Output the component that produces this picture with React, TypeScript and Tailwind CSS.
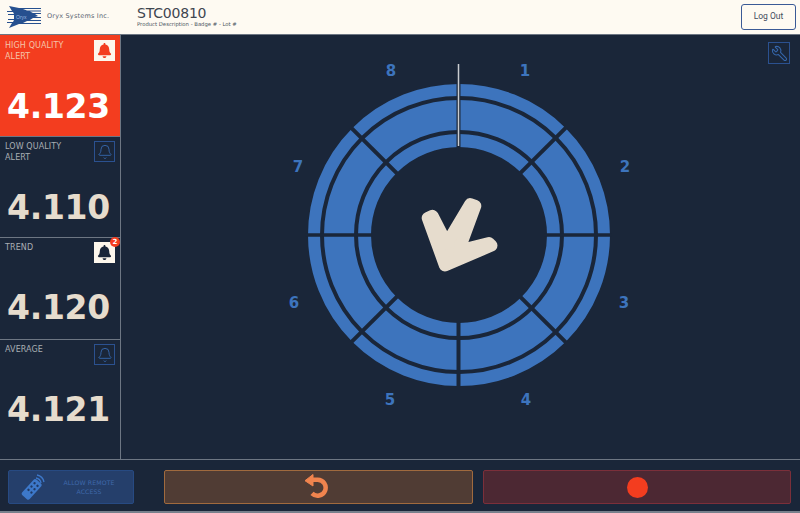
import React from 'react';
import { Bell, Wrench } from 'lucide-react';
import { FaBell } from 'react-icons/fa';

const cx = 458.5;
const cy = 235;

const wheelLabels = [
  { n: '1', x: 525, y: 70 },
  { n: '2', x: 625, y: 166 },
  { n: '3', x: 624, y: 302 },
  { n: '4', x: 526, y: 399 },
  { n: '5', x: 390, y: 399 },
  { n: '6', x: 294, y: 302 },
  { n: '7', x: 298, y: 166 },
  { n: '8', x: 391, y: 70 },
];

const Logo = () => (
  <svg width="36" height="22" viewBox="0 0 36 22" className="shrink-0">
    <path d="M3 0 L13 2 H35 V3 H17 L21 4.5 H35 V5.5 H24 L27 7 H35 V8 H29 L32 10 L29 11 H35 V12 H27 L24 14 H35 V15 H21 L17 17 H35 V18 H13 L3 22 L6 17 H1 V16 H7 L8 14 H2 V13 H8 L8 9 H2 V8 H8 L7 6 H1 V5 H6 Z" fill="#26508f" />
    <text x="10" y="13" fontSize="5" fill="#9db9e0" fontFamily="Liberation Sans, sans-serif">Oryx</text>
  </svg>
);

const RemoteIcon = () => (
  <svg width="24" height="26" viewBox="0 0 24 26" fill="none">
    <g transform="rotate(42 11 15)">
      <rect x="6" y="5" width="10" height="21" rx="2" fill="#3d78c9" />
      <circle cx="9" cy="9" r="1.2" fill="#1f3a66" />
      <circle cx="13" cy="9" r="1.2" fill="#1f3a66" />
      <circle cx="9" cy="13.5" r="1.2" fill="#1f3a66" />
      <circle cx="13" cy="13.5" r="1.2" fill="#1f3a66" />
      <circle cx="9" cy="18" r="1.2" fill="#1f3a66" />
      <circle cx="13" cy="18" r="1.2" fill="#1f3a66" />
    </g>
    <path d="M15 4 A6 6 0 0 1 20 9" stroke="#3d78c9" strokeWidth="1.3" />
    <path d="M16 1 A9 9 0 0 1 23 8" stroke="#3d78c9" strokeWidth="1.3" />
  </svg>
);

const UndoIcon = () => (
  <svg width="24" height="24" viewBox="0 0 24 24" className="mr-[6px] mt-[-2px]">
    <path d="M8 5.7 H13.7 A8 8 0 1 1 8 19.4" fill="none" stroke="#f0844e" strokeWidth="4.5" />
    <path d="M1 6.7 L9 0.5 V12 Z" fill="#f0844e" stroke="#f0844e" strokeWidth="1" strokeLinejoin="round" />
  </svg>
);

const Wheel = () => {
  const rays = [45, 135, 225, 315];
  return (
    <svg width="800" height="424" viewBox="0 35 800 424" className="absolute left-[-121px] top-0">
      <circle cx={cx + 0.5} cy={cy} r="119.5" fill="none" stroke="#3d74bd" strokeWidth="63" />
      <circle cx={cx + 0.5} cy={cy} r="137" fill="none" stroke="#1a2639" strokeWidth="4" />
      <circle cx={cx + 0.5} cy={cy} r="103" fill="none" stroke="#1a2639" strokeWidth="4" />
      {rays.map((a) => {
        const rad = (a * Math.PI) / 180;
        return (
          <line
            key={a}
            x1={cx + Math.cos(rad) * 86}
            y1={cy + Math.sin(rad) * 86}
            x2={cx + Math.cos(rad) * 153}
            y2={cy + Math.sin(rad) * 153}
            stroke="#1a2639"
            strokeWidth="4"
          />
        );
      })}
      <line x1={cx - 86} y1={cy} x2={cx - 153} y2={cy} stroke="#1a2639" strokeWidth="3.5" />
      <line x1={cx + 86} y1={cy} x2={cx + 153} y2={cy} stroke="#1a2639" strokeWidth="3.5" />
      <line x1={cx} y1={cy + 86} x2={cx} y2={cy + 153} stroke="#1a2639" strokeWidth="4" />
      <line x1={cx} y1={cy - 86} x2={cx} y2={cy - 153} stroke="#1a2639" strokeWidth="4" />
      <line x1={cx} y1="64" x2={cx} y2="146" stroke="#c9ccd0" strokeWidth="1.5" />
      {wheelLabels.map((l) => (
        <text
          key={l.n}
          x={l.x}
          y={l.y + 5.5}
          textAnchor="middle"
          fontSize="15"
          fontWeight="700"
          fill="#3d74bd"
          fontFamily="DejaVu Sans, sans-serif"
        >
          {l.n}
        </text>
      ))}
      <path
        d="M427.7 217.9 L432.5 215.8 L446.7 243.5 L470.3 204.1 L475.3 205.9 L458.9 250.5 L488.9 243 L491.5 245.6 L444.9 265.4 Z"
        fill="#e6dccd"
        stroke="#e6dccd"
        strokeWidth="12"
        strokeLinejoin="round"
      />
    </svg>
  );
};

type CardProps = {
  label: string;
  value: string;
  className: string;
  alert?: boolean;
  badge?: string;
  solid?: boolean;
};

const ReadingCard = ({ label, value, className, alert, badge, solid }: CardProps) => (
  <div className={`flex flex-col border-b border-[#6d7683] px-[5px] last:border-b-0 ${className}`}>
    <div className="flex items-start justify-between">
      <p
        className={`w-[75px] text-[8px] leading-[11px] tracking-[0.1px] ${
          alert ? 'text-[#f5c4a8]' : 'text-[#a9aeb3]'
        }`}
      >
        {label}
      </p>
      {alert || solid ? (
        <div className="relative flex h-[21px] w-[21px] items-center justify-center bg-[#fdf7ec]">
          <FaBell className={`h-[15px] w-[15px] ${alert ? 'text-[#f33d1f]' : 'text-[#1a2639]'}`} />
          {badge && (
            <span className="absolute right-[-5px] top-[-5px] flex h-[10px] w-[10px] items-center justify-center rounded-full bg-[#f33d1f] text-[7px] font-bold leading-none text-white">
              {badge}
            </span>
          )}
        </div>
      ) : (
        <div className="flex h-[21px] w-[21px] items-center justify-center border border-[#2b5190]">
          <Bell className="h-[16px] w-[16px] text-[#3566ab]" strokeWidth={1.4} />
        </div>
      )}
    </div>
    <p
      className={`ml-[2px] mt-[26px] text-[33px] font-bold leading-[38px] tracking-[-0.3px] ${
        alert ? 'text-white' : 'text-[#e6dccd]'
      }`}
    >
      {value}
    </p>
  </div>
);

export default function App() {
  return (
    <div className="flex h-[513px] w-[800px] flex-col overflow-hidden bg-[#1a2639] font-['DejaVu_Sans',sans-serif]">
      <header className="flex h-[35px] shrink-0 items-center border-b border-[#6d7683] bg-[#fefaf2] pl-[6px] pr-[4px]">
        <Logo />
        <span className="ml-[5px] w-[90px] text-[6.5px] tracking-[0.2px] text-[#5a6472]">Oryx Systems Inc.</span>
        <div className="flex flex-col">
          <span className="text-[14px] leading-[15px] tracking-[-0.2px] text-[#3f4650]">STC00810</span>
          <span className="text-[5.3px] leading-[7px] text-[#4c5561]">Product Description - Badge # - Lot #</span>
        </div>
        <button className="ml-auto mt-[-1px] h-[26px] w-[55px] rounded-[3px] border border-[#3a5a96] bg-[#fefaf2] font-['Roboto',sans-serif] text-[8.5px] text-[#3f4a5c]">
          Log Out
        </button>
      </header>

      <div className="flex h-[424px] shrink-0">
        <aside className="flex w-[121px] shrink-0 flex-col border-r border-[#6d7683]">
          <ReadingCard label="HIGH QUALITY ALERT" value="4.123" alert className="h-[102px] bg-[#f33d1f] pt-[5px]" />
          <ReadingCard label="LOW QUALITY ALERT" value="4.110" className="h-[101px] pt-[4px]" />
          <ReadingCard label="TREND" value="4.120" solid badge="2" className="h-[102px] pt-[4px]" />
          <ReadingCard label="AVERAGE" value="4.121" className="flex-1 pt-[4px]" />
        </aside>
        <main className="relative flex-1">
          <Wheel />
          <div className="absolute right-[10px] top-[7px] flex h-[22px] w-[22px] items-center justify-center border border-[#2b5190]">
            <Wrench className="h-[17px] w-[17px] -scale-x-100 text-[#3566ab]" strokeWidth={1.5} />
          </div>
        </main>
      </div>

      <footer className="flex h-[52px] shrink-0 items-start border-t border-[#6d7683] pl-[8px] pr-[9px] pt-[10px]">
        <button className="flex h-[34px] w-[126px] items-center rounded-[2px] border border-[#274a82] bg-[#253f6b] pl-[12px]">
          <RemoteIcon />
          <span className="ml-[11px] w-[66px] text-center text-[6.2px] leading-[9px] tracking-[0.1px] text-[#3f68aa]">
            ALLOW REMOTE ACCESS
          </span>
        </button>
        <button className="ml-[30px] flex h-[34px] w-[309px] items-center justify-center rounded-[2px] border border-[#a06a3e] bg-[#503c34]">
          <UndoIcon />
        </button>
        <button className="ml-[10px] flex h-[34px] w-[308px] items-center justify-center rounded-[2px] border border-[#7b2f3a] bg-[#4c2833]">
          <span className="h-[21px] w-[21px] rounded-full bg-[#f33d1f]" />
        </button>
      </footer>
      <div className="h-[2px] shrink-0 bg-[#77808c]" />
    </div>
  );
}
